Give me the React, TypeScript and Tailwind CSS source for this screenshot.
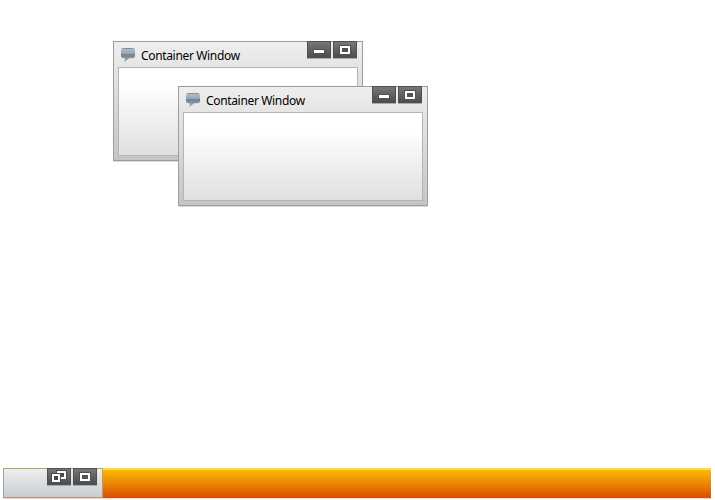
type Glyph = 'min' | 'max' | 'restore';

function ControlButton({ glyph }: { glyph: Glyph }) {
  return (
    <span className="block h-[17px] w-6 border border-[#505050] bg-linear-to-b from-[#777] to-[#4d4d4d] shadow-[0_1px_0_#aaa]">
      <svg className="-mt-px -ml-px block" width="24" height="17" shapeRendering="crispEdges">
        {glyph === 'min' && (
          <>
            <rect x="6" y="8" width="12" height="5" fill="#505050" />
            <rect x="7" y="9" width="10" height="3" fill="#fff" />
          </>
        )}
        {glyph === 'max' && (
          <>
            <rect x="6" y="4" width="12" height="10" fill="#515151" />
            <path fillRule="evenodd" fill="#fff" d="M7 5h10v8H7zM9 7v4h6V7z" />
          </>
        )}
        {glyph === 'restore' && (
          <>
            <path fill="#4a4a4a" d="M9 2h11v9h-6v4H4V5h5z" />
            <path fillRule="evenodd" fill="#fff" d="M10 3h9v8h-9zM12 5v4h5V5z" />
            <path fill="#4a4a4a" d="M5 5h9v9H5z" />
            <path fillRule="evenodd" fill="#fff" d="M5 6h8v8H5zM7 8v4h4V8z" />
          </>
        )}
      </svg>
    </span>
  );
}

function ChatIcon() {
  return (
    <svg width="16" height="16" viewBox="0 0 16 16" className="block">
      <defs>
        <linearGradient id="chat" x1="0" y1="0" x2="0" y2="1">
          <stop offset="0" stopColor="#74828e" />
          <stop offset=".12" stopColor="#b0bcc7" />
          <stop offset=".43" stopColor="#94a3b0" />
          <stop offset=".45" stopColor="#708392" />
          <stop offset="1" stopColor="#9aacb9" />
        </linearGradient>
      </defs>
      <path
        fill="url(#chat)"
        d="M3 1h9.5Q15 1 15 3.7v4.9q0 2.7-2.5 2.7H9.2L4.4 15 5 11.3H3.5Q1 11.3 1 8.6V3.7Q1 1 3 1z"
      />
    </svg>
  );
}

function ContainerWindow({ place }: { place: string }) {
  return (
    <section
      className={`absolute flex h-[120px] w-[250px] flex-col border border-[#9d9d9d] bg-linear-to-b from-[#eeeeee] to-[#c4c5c6] px-1 pb-1 shadow-[0_1px_0_#ddd] ${place}`}
    >
      <header className="-mt-px flex h-[26px] shrink-0 items-start">
        <div className="mt-[6px] ml-[2px]">
          <ChatIcon />
        </div>
        <h2 className="mt-[6px] ml-[5px] text-[12px] leading-[17px] tracking-[-0.34px] whitespace-nowrap text-black">
          Container Window
        </h2>
        <div className="mr-px ml-auto flex gap-0.5">
          <ControlButton glyph="min" />
          <ControlButton glyph="max" />
        </div>
      </header>
      <div className="grow border border-[#b5b5b5] bg-linear-to-b from-white from-20% to-[#e0e0e0]" />
    </section>
  );
}

export default function App() {
  return (
    <main className="relative flex h-[500px] w-[715px] flex-col justify-end overflow-hidden bg-white pr-1 pb-0.5 pl-[3px] font-['Noto_Sans',sans-serif]">
      <ContainerWindow place="left-[113px] top-[41px]" />
      <ContainerWindow place="left-[178px] top-[86px]" />
      <footer className="flex h-[30px] bg-linear-to-b from-[#fac000] to-[#d94b00] shadow-[0_1px_0_#f8d9cc]">
        <div className="flex w-[100px] items-start justify-end gap-0.5 border border-x-[#a0a0a0] border-t-[#b9a66a] border-b-[#b98b7c] bg-linear-to-b from-[#eeeeee] to-[#c9cdd1] pr-[5px]">
          <div className="-mt-px flex gap-0.5">
            <ControlButton glyph="restore" />
            <ControlButton glyph="max" />
          </div>
        </div>
        <div className="grow border-t-2 border-[#ffd84b]" />
      </footer>
    </main>
  );
}
